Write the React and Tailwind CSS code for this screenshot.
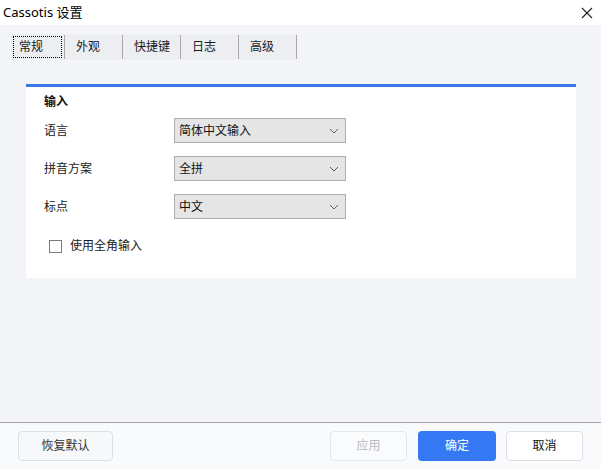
import React, { useState } from 'react';

const font = { fontFamily: '"Noto Sans", "Noto Sans CJK SC", sans-serif' };

const tabs = ['常规', '外观', '快捷键', '日志', '高级'];

const Chevron = () => (
  <svg width="10" height="6" viewBox="0 0 10 6" className="text-[#606060]">
    <path d="M1 1 L5 5 L9 1" fill="none" stroke="currentColor" strokeWidth="1" />
  </svg>
);

const Select = ({ value }) => (
  <div className="w-[172px] h-[25px] flex items-center justify-between pl-[4px] pr-[6px] bg-[#e5e5e5] border border-[#adadad] text-[12px] text-[#111]">
    <span>{value}</span>
    <Chevron />
  </div>
);

const App = () => {
  const [active] = useState(0);

  return (
    <div className="w-[601px] h-[469px] flex flex-col bg-[#f3f5f8] overflow-hidden text-[#1a1a1a]" style={font}>
      {/* 标题栏 */}
      <div className="h-[25px] bg-white flex items-center justify-between pl-[3px] pr-[8px]">
        <span className="text-[13px] text-black">Cassotis 设置</span>
        <svg width="12" height="12" viewBox="0 0 12 12">
          <path d="M1 1 L11 11 M11 1 L1 11" stroke="#222" strokeWidth="1.1" />
        </svg>
      </div>

      <div className="flex-1 flex flex-col">
        {/* 标签页 */}
        <div className="mt-[9px] ml-[11px] flex h-[26px]">
          {tabs.map((t, i) => (
            <div key={t} className="flex items-stretch">
              <div
                className={
                  i === 0
                    ? 'w-[53px] flex items-center p-[2px] bg-[#eceef1]'
                    : 'w-[57px] flex items-center pl-[11px] bg-[#eceef1] text-[12px]'
                }
              >
                {i === active ? (
                  <div className="w-full h-full flex items-center pl-[5px] border border-dotted border-black text-[12px]">
                    {t}
                  </div>
                ) : (
                  t
                )}
              </div>
              <div className="w-[1px] my-[1px] bg-[#a6a6a6]" />
            </div>
          ))}
        </div>

        {/* 面板 */}
        <div className="mt-[24px] ml-[26px] w-[550px] bg-white border-t-[3px] border-[#3b78e7] pl-[18px] pt-[7px] pb-[24px]">
          <div className="text-[12px] font-semibold leading-[16px] text-[#111]">输入</div>
          <div className="mt-[8px] flex flex-col gap-[13px]">
            {[
              ['语言', '简体中文输入'],
              ['拼音方案', '全拼'],
              ['标点', '中文'],
            ].map(([label, value]) => (
              <div key={label} className="flex items-center">
                <span className="w-[130px] text-[12px]">{label}</span>
                <Select value={value} />
              </div>
            ))}
          </div>
          <div className="mt-[19px] ml-[5px] flex items-center h-[16px]">
            <div className="w-[13px] h-[13px] border border-[#7a7a7a] bg-white" />
            <span className="ml-[8px] text-[12px]">使用全角输入</span>
          </div>
        </div>
      </div>

      {/* 底部按钮 */}
      <div className="h-[47px] border-t border-[#a0a0a0] bg-[#f9fafb] flex items-center px-[18px] text-[12px]">
        <button className="w-[95px] h-[30px] rounded-[4px] border border-[#dcdfe6] bg-[#f7f8fa] text-[#333]">
          恢复默认
        </button>
        <div className="flex-1" />
        <button className="w-[77px] h-[30px] rounded-[4px] border border-[#e4e7ed] bg-[#fafbfc] text-[#b8bcc4]">
          应用
        </button>
        <button className="ml-[11px] w-[78px] h-[30px] rounded-[4px] bg-[#3478f6] text-white">
          确定
        </button>
        <button className="ml-[10px] w-[77px] h-[30px] rounded-[4px] border border-[#dcdfe6] bg-white text-[#111]">
          取消
        </button>
      </div>
    </div>
  );
};

export default App;
